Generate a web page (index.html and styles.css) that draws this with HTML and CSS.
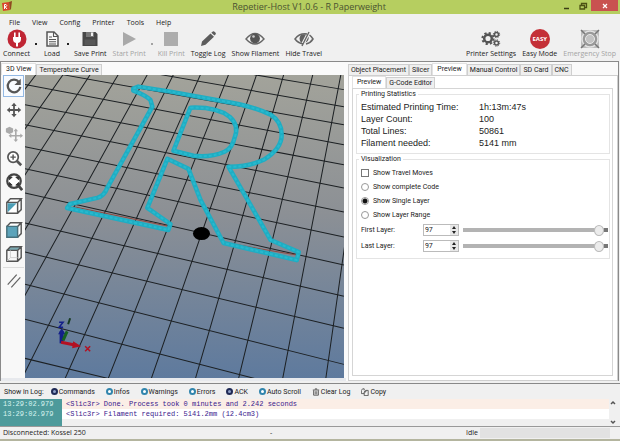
FILE: index.html
```html
<!DOCTYPE html>
<html lang="en">
<head>
<meta charset="utf-8">
<title>Repetier-Host V1.0.6 - R Paperweight</title>
<link rel="stylesheet" href="styles.css">
</head>
<body>
<header class="titlebar">
  <svg class="app-icon" viewBox="0 0 12 12"><path d="M1 3l7-1 1 8-7 1z" fill="#d8452c"/><path d="M8 2l3-1-1 8-1 1z" fill="#8f4a20"/><path d="M3.500 9V4.500h1.500q1.500 1 0 2.200H4l2 2.300" fill="none" stroke="#fff"/></svg>
  <h1>Repetier-Host V1.0.6 - R Paperweight</h1>
  <div class="window-controls">
    <button aria-label="Minimize"><svg viewBox="0 0 10 10"><path d="M2 7.500h5" stroke="#3b3d14" stroke-width="1.500"/></svg></button>
    <button aria-label="Restore"><svg viewBox="0 0 10 10"><path d="M3.500 4V2.500h5v4H7M2 4.500h4.500v3.500H2z" fill="none" stroke="#4d5214" stroke-width="1.300"/></svg></button>
    <button class="close" aria-label="Close"><svg viewBox="0 0 10 10"><path d="M3 3l4 4M7 3L3 7" stroke="#fff" stroke-width="1.200"/></svg></button>
  </div>
</header>

<nav class="menubar">
  <button>File</button><button>View</button><button>Config</button><button>Printer</button><button>Tools</button><button>Help</button>
</nav>

<div class="toolbar">
  <button class="tool"><svg viewBox="0 0 20 20"><circle cx="10" cy="10" r="9.500" fill="#c02634"/><path d="M6 8h8v2q0 3.500-3 4v3.500H9V14q-3-.5-3-4zM7 3.500h1.600V8H7zM11.400 3.500H13V8h-1.600z" fill="#fff"/></svg>Connect</button>
  <button class="caret" aria-label="Connect options"></button>
  <button class="tool"><svg viewBox="0 0 20 20"><path d="M5 3h7l4 4v10H5z" fill="#f8f8f8" stroke="#555" stroke-width="1.500"/><path d="M11.500 3v4.500H16M7 8h3M7 10.500h7M7 12.700h7M7 15h7" fill="none" stroke="#555" stroke-width="1.100"/></svg>Load</button>
  <button class="caret" aria-label="Load options"></button>
  <button class="tool"><svg viewBox="0 0 20 20"><path d="M2.500 3h13l2 2v12h-15z" fill="#474747"/><path d="M6 3h8v5H6z" fill="#777"/><path d="M11 3.500h2v3.500h-2z" fill="#f0f0f0"/><path d="M4.500 10.500h11V16h-11z" fill="#585858"/></svg>Save Print</button>
  <button class="tool disabled"><svg viewBox="0 0 20 20"><path d="M4 3l13 7-13 7z" fill="#a9a9a9"/></svg>Start Print</button>
  <button class="caret disabled" aria-label="Start options"></button>
  <button class="tool disabled"><svg viewBox="0 0 20 20"><path d="M3 3h14v14H3z" fill="#adadad"/></svg>Kill Print</button>
  <button class="tool"><svg viewBox="0 0 20 20"><path d="M3 17l1-4.500 8.500-8 3.500 3.300-8.500 8zM13.300 3.800l1.500-1.300q1-.5 2 .5l.8.800q.7.800-.1 1.600l-1 1z" fill="#5c5c5c"/></svg>Toggle Log</button>
  <button class="tool"><svg viewBox="0 0 20 20"><path d="M1 10Q10-1 19 10 10 20 1 10z" fill="#f2f2f2" stroke="#666" stroke-width="1.400"/><circle cx="10" cy="9.500" r="4.900" fill="#555"/><circle cx="8.500" cy="7.500" r="1.300" fill="#ccc"/></svg>Show Filament</button>
  <button class="tool"><svg viewBox="0 0 20 20"><path d="M9 15Q4 14 1 10q4.500-6 12-5M15.500 6q2 1.500 3.500 4-2.500 4-7 5" fill="none" stroke="#666" stroke-width="1.500"/><path d="M12 5.500q-6-1.500-6.500 4 0 3 2 4.500zM14.500 7.500q1 4-3 6.300z" fill="#606060"/><path d="M15 3L8 17" stroke="#666" stroke-width="1.400"/></svg>Hide Travel</button>
  <span class="spacer"></span>
  <button class="tool"><svg viewBox="0 0 20 20" fill="none" stroke="#555"><circle cx="7" cy="9.500" r="3.800" stroke-width="2.500"/><circle cx="7" cy="9.500" r="5.600" stroke-width="2" stroke-dasharray="2.200 2.200"/><circle cx="15.500" cy="5.500" r="2" stroke-width="1.500"/><circle cx="15.500" cy="5.500" r="3.200" stroke-dasharray="1.300 1.200"/><circle cx="15.500" cy="14" r="2" stroke-width="1.500"/><circle cx="15.500" cy="14" r="3.200" stroke-dasharray="1.300 1.200"/></svg>Printer Settings</button>
  <button class="tool"><span class="easy">EASY</span>Easy Mode</button>
  <button class="tool disabled"><svg viewBox="0 0 20 20"><path d="M1 1h18v18H1z" fill="#bcbcbc"/><circle cx="10" cy="10" r="8" fill="#999" stroke="#e2e2e2" stroke-width="1.500"/><circle cx="10" cy="10" r="4.500" fill="#c2c2c2" stroke="#e8e8e8"/><path d="M1 1l4 4M19 1l-4 4M1 19l4-4M19 19l-4-4" stroke="#777" stroke-width="1.500"/></svg>Emergency Stop</button>
</div>

<main class="workspace">
  <section class="view-pane">
    <div class="tabs" role="tablist">
      <button role="tab" class="tab active">3D View</button><button role="tab" class="tab">Temperature Curve</button>
    </div>
    <div class="view-body">
      <div class="view-tools">
        <button class="selected" aria-label="Rotate"><svg viewBox="0 0 20 20"><path d="M15.500 5.500A7 7 0 1 0 17 11" fill="none" stroke="#555" stroke-width="2.500"/><path d="M17.500 2v7h-7z" fill="#555"/></svg></button>
        <button aria-label="Move camera"><svg viewBox="0 0 20 20"><path d="M10 4v12M4 10h12" stroke="#555" stroke-width="2"/><path d="M10 2l3 3.500H7zM10 18l3-3.500H7zM2 10l3.500-3v6zM18 10l-3.500-3v6z" fill="#555"/></svg></button>
        <button aria-label="Move object"><svg viewBox="0 0 20 20"><path d="M1 4l4-2 4 2v4L5 10 1 8z" fill="#aaa"/><path d="M12 6v11M6 12h12" stroke="#aaa" stroke-width="1.800"/><path d="M12 4l2.500 3h-5zM12 19l2.500-3h-5zM4 12l3-2.500v5zM20 12l-3-2.500v5z" fill="#aaa"/></svg></button>
        <button aria-label="Zoom"><svg viewBox="0 0 20 20"><circle cx="9" cy="9" r="5.800" fill="#fff" stroke="#555" stroke-width="1.900"/><path d="M13 13l5 5" stroke="#555" stroke-width="3"/><path d="M6 9h6M9 6v6" stroke="#555" stroke-width="1.600"/></svg></button>
        <button aria-label="Fit view"><svg viewBox="0 0 20 20"><circle cx="10" cy="9" r="7.500" fill="#fff" stroke="#444" stroke-width="2.500"/><path d="M15 14l4 5" stroke="#444" stroke-width="3"/><path d="M5 7.500V4.500h3zM12 4.500h3v3zM5 10.500v3h3zM12 13.500h3v-3z" fill="#333" stroke="#333"/></svg></button>
        <button aria-label="Isometric view"><svg viewBox="0 0 20 20"><path d="M2 6h12v12H2zM2 6l4-4h12l-4 4M18 2v12l-4 4" fill="#fff" stroke="#555" stroke-width="1.600"/><path d="M3 7h10L3 17z" fill="#4b9eb6"/></svg></button>
        <button aria-label="Front view"><svg viewBox="0 0 20 20"><path d="M2 6l4-4h12l-4 4M18 2v12l-4 4" fill="#fff" stroke="#555" stroke-width="1.600"/><path d="M2 6h12v12H2z" fill="#5ca3ba" stroke="#46707c" stroke-width="1.600"/></svg></button>
        <button aria-label="Top view"><svg viewBox="0 0 20 20"><path d="M2 6l4-4h12l-4 4z" fill="#7ba9b2"/><path d="M2 6h12v12H2zM2 6l4-4h12l-4 4M18 2v12l-4 4" fill="none" stroke="#555" stroke-width="1.600"/><path d="M6 6v8h8M6 14l-4 4" fill="none" stroke="#ccc"/></svg></button>
        <button class="parallel" aria-label="Parallel projection"><svg viewBox="0 0 20 20"><path d="M3 14L13 3M7 17L17 6" stroke="#666" stroke-width="1.400"/></svg></button>
      </div>
      <svg class="scene" viewBox="25 75 318 303" preserveAspectRatio="xMidYMid slice" role="img" aria-label="Layer preview">
        <defs><linearGradient id="sky" x1="0" y1="0" x2="0" y2="1"><stop offset="0" stop-color="#a5a59b"/><stop offset=".45" stop-color="#8c9095"/><stop offset="1" stop-color="#58779f"/></linearGradient></defs>
        <path d="M0 60h370v340H0z" fill="url(#sky)"/>
        <g stroke="#1c2023" stroke-width="1" fill="none">
          <path d="M253 75L343 90M160 75L343 107M62 75L343 125M25 85L343 145M25 105L343 165M25 125L343 188M25 147L343 212M25 169L343 237M25 193L343 265M25 223L343 296M25 252L343 328M25 284L343 364M25 319L343 401M25 358L343 435"/>
          <path d="M36 75L-193 378M63 75L-150 378M90 75L-107 378M118 75L-64 378M147 75L-21 378M173 75L22 378M200 75L65 378M228 75L108 378M256 75L151 378M283 75L195 378M312 75L238 378M340 75L282 378M368 75L325 378"/>
        </g>
        <path d="M153 107L112 180M75 207L167 226M227 243L296 255" stroke="#8b4b44" stroke-width="1"/>
        <g fill="none" stroke-linejoin="round">
          <g stroke="#1fadc3" stroke-width="4.500">
            <path id="outline" d="M133 89L138 87 170 92 220 101Q252 106 270 115 281 122 281 135 281 149 263 160 248 167 228 167L247 200 270 240 298 252 296 260 223 243 200 200 188 169 167 159 147 208 170 224 168 230 67 208 70 204 97 198Q104 196 107 188L152 107 150 100Q144 95 133 91z"/>
            <path id="counter" d="M190 108Q216 107 229 117 239 126 234 138 232 148 224 152 210 158 193 156L173 151z"/>
          </g>
          <g stroke="#28b9ce" stroke-width="2" stroke-dasharray="3 2"><use href="#outline"/><use href="#counter"/></g>
        </g>
        <ellipse cx="201" cy="233.500" rx="8.500" ry="6.500"/>
        <g><path d="M61.500 343v-12" stroke="#14208a" stroke-width="4"/><path d="M58 334l3.500-6 4 6z" fill="#14208a"/><path d="M63 340l4-9" stroke="#176222" stroke-width="3"/><path d="M61 342l15 3" stroke="#b31122" stroke-width="3"/><path d="M73 341l8 5-9 2z" fill="#b31122"/><path d="M59 322h4l-4 5h4" stroke="#14208a" stroke-width="1.500" fill="none"/><path d="M70 318l-2 6" stroke="#173b22" stroke-width="2"/><path d="M85 346l5 5M90 346l-5 5" stroke="#b31122" stroke-width="1.500"/></g>
      </svg>
    </div>
  </section>

  <section class="side-pane">
    <div class="tabs" role="tablist">
      <button role="tab" class="tab">Object Placement</button><button role="tab" class="tab">Slicer</button><button role="tab" class="tab active">Preview</button><button role="tab" class="tab">Manual Control</button><button role="tab" class="tab">SD Card</button><button role="tab" class="tab">CNC</button>
    </div>
    <div class="side-body">
      <div class="tabs inner" role="tablist">
        <button role="tab" class="tab active">Preview</button><button role="tab" class="tab">G-Code Editor</button>
      </div>
      <div class="panel">
        <fieldset>
          <legend>Printing Statistics</legend>
          <dl class="stats">
            <dt>Estimated Printing Time:</dt><dd>1h:13m:47s</dd>
            <dt>Layer Count:</dt><dd>100</dd>
            <dt>Total Lines:</dt><dd>50861</dd>
            <dt>Filament needed:</dt><dd>5141 mm</dd>
          </dl>
        </fieldset>
        <fieldset>
          <legend>Visualization</legend>
          <div class="options">
            <label><input type="checkbox">Show Travel Moves</label>
            <label><input type="radio" name="layers">Show complete Code</label>
            <label><input type="radio" name="layers" checked>Show Single Layer</label>
            <label><input type="radio" name="layers">Show Layer Range</label>
          </div>
          <div class="layer-row">
            <label for="first">First Layer:</label>
            <div class="spinner"><input id="first" type="text" value="97"><span class="steps"><button aria-label="Increase first layer"></button><button class="down" aria-label="Decrease first layer"></button></span></div>
            <input type="range" min="0" max="100" value="97" aria-label="First layer">
          </div>
          <div class="layer-row">
            <label for="last">Last Layer:</label>
            <div class="spinner"><input id="last" type="text" value="97"><span class="steps"><button aria-label="Increase last layer"></button><button class="down" aria-label="Decrease last layer"></button></span></div>
            <input type="range" min="0" max="100" value="97" aria-label="Last layer">
          </div>
        </fieldset>
      </div>
    </div>
  </section>
</main>

<section class="log">
  <div class="log-bar">
    <span class="log-title">Show in Log:</span>
    <button class="toggle on" aria-pressed="true">Commands</button>
    <button class="toggle" aria-pressed="false">Infos</button>
    <button class="toggle" aria-pressed="false">Warnings</button>
    <button class="toggle" aria-pressed="false">Errors</button>
    <button class="toggle on" aria-pressed="true">ACK</button>
    <button class="toggle" aria-pressed="false">Auto Scroll</button>
    <button><svg viewBox="0 0 10 10"><path d="M1 2.500h8M4 2V1h2v1M2 3v6h6V3M4 4v4M6 4v4" fill="none" stroke="#444"/></svg>Clear Log</button>
    <button><svg viewBox="0 0 10 10"><path d="M4 3V1H2L.5 3v4H4M4 5l2-2h3v6.500H4zM6 3v2H4" fill="none" stroke="#444"/></svg>Copy</button>
  </div>
  <div class="log-body">
    <div class="log-lines">
      <div class="line tint"><time>13:29:02.979</time><span>&lt;Slic3r&gt; Done. Process took 0 minutes and 2.242 seconds</span></div>
      <div class="line"><time>13:29:02.979</time><span>&lt;Slic3r&gt; Filament required: 5141.2mm (12.4cm3)</span></div>
      <div class="line rest"><time></time><span></span></div>
    </div>
    <div class="scroll"><button aria-label="Scroll up"><svg viewBox="0 0 8 8"><path d="M2 5l2-2 2 2" fill="none" stroke="#555" stroke-width="1.500"/></svg></button><button aria-label="Scroll down"><svg viewBox="0 0 8 8"><path d="M2 3l2 2 2-2" fill="none" stroke="#555" stroke-width="1.500"/></svg></button></div>
  </div>
</section>

<footer class="status">
  <span>Disconnected: Kossel 250</span><span class="dash">-</span><span>Idle</span><div class="progress"></div>
</footer>
</body>
</html>
```
FILE: styles.css
```css
*, *::before { box-sizing: border-box; }

body {
  margin: 0;
  height: 100vh;
  display: flex;
  flex-direction: column;
  overflow: hidden;
  background: #f0f0f0;
  color: #222;
  font: 7px/10px "Open Sans", "Noto Sans", sans-serif;
  border-bottom: 2px solid #b4b59f;
}

button {
  margin: 0;
  padding: 0;
  border: 0;
  background: none;
  color: inherit;
  font: inherit;
  white-space: nowrap;
}

svg { display: block; }

/* Title bar */
.titlebar {
  display: grid;
  grid-template-columns: 1fr auto 1fr;
  height: 14px;
  padding-right: 2px;
  background: #b6ce60;
}
.app-icon { width: 12px; height: 12px; margin-left: 1px; }
.titlebar h1 { margin: 0; font-size: 9px; line-height: 13px; font-weight: 400; color: #4a5230; }
.window-controls { display: flex; justify-content: flex-end; }
.window-controls button { width: 16px; height: 11px; display: grid; place-items: center; }
.window-controls svg { width: 10px; height: 10px; }
.window-controls .close { width: 27px; background: #c95250; }

/* Menus and tools */
.menubar { display: flex; gap: 12px; height: 15px; padding: 2px 9px 0; }
.toolbar { display: flex; gap: 6px; height: 32px; padding: 0 4px 0 3px; }
.tool { display: flex; flex-direction: column; align-items: center; }
.tool svg, .easy { width: 20px; height: 20px; }
.easy {
  border-radius: 50%;
  background: #c43037;
  color: #fff;
  font-size: 6px;
  font-weight: 700;
  line-height: 20px;
  text-align: center;
}
.disabled { color: #a3a3a3; }
.caret {
  width: 2px;
  height: 2px;
  margin: 14px -1px 0;
  background: currentColor;
}
.spacer { flex: 1; }

/* Panes */
.workspace {
  flex: 1;
  min-height: 0;
  display: grid;
  grid-template-columns: minmax(0, 346fr) minmax(0, 271fr);
  gap: 2px;
  margin-right: 1px;
  border-top: 1px solid #8a8a8a;
  border-right: 1px solid #8a8a8a;
  border-left: 1px solid #8a8a8a;
  background: #fafafa;
}
.view-pane, .side-pane { display: flex; flex-direction: column; min-height: 0; }
.tabs, .side-body, .log-bar { font: 7px/10px Roboto, "Liberation Sans", sans-serif; }
.tabs { display: flex; align-items: flex-end; height: 13px; }
.tabs.inner { height: 12px; }
.tab {
  height: 11px;
  padding: 0 2px;
  border: 1px solid #cfcfcf;
  border-bottom: 0;
  background: #efefef;
}
.tab.active { height: 12px; padding: 0 4px 1px; background: #fff; border-color: #e2e2e2; }

.view-body { flex: 1; display: flex; min-height: 0; border-bottom: 3px solid #e7e9ed; }
.view-tools { width: 24px; display: flex; flex-direction: column; gap: 2px; padding-left: 2px; background: #f8f8f8; }
.view-tools button { width: 21px; height: 22px; display: grid; place-items: center; }
.view-tools svg { width: 18px; height: 18px; }
.view-tools .selected { border: 1px solid #93b9e4; background: #f8fbff; }
.view-tools .parallel { height: 26px; border-top: 1px solid #ddd; }
.scene { flex: 1; min-width: 0; height: 100%; margin-right: 2px; }

.side-body {
  flex: 1;
  display: flex;
  flex-direction: column;
  padding: 0 4px 4px 3px;
  border: 1px solid #cfcfcf;
  background: #fff;
}
.panel { flex: 1; padding: 0 2px 0 3px; border: 1px solid #d5d5d5; }
fieldset { min-width: 0; margin: 0; padding: 2px 1px 4px 2px; border: 1px solid #e4e4e4; }
legend { margin: 0; padding: 0 2px; }
.stats {
  display: grid;
  grid-template-columns: 119fr 130fr;
  margin: 0;
  padding-left: 2px;
  font: 9px/12px "Liberation Sans", Arial, sans-serif;
}
.stats dd { margin: 0; }
.options { display: flex; flex-direction: column; align-items: flex-start; padding: 0 2px; }
.options label { display: flex; align-items: center; gap: 4px; height: 14px; }
.options input {
  appearance: none;
  width: 8px;
  height: 8px;
  margin: 0;
  border: 1px solid #777;
  background: #fff;
}
.options input[type="radio"] { border-color: #999; border-radius: 50%; }
.options input:checked { background: radial-gradient(#111 0 2px, #fff 3px); }

.layer-row {
  display: grid;
  grid-template-columns: 62px 36px 1fr;
  align-items: center;
  height: 16px;
  padding-left: 2px;
}
.spinner { display: flex; height: 12px; border: 1px solid #bbb; background: #fff; }
.spinner input { flex: 1; min-width: 0; padding: 0 1px; border: 0; font: inherit; color: inherit; background: none; }
.steps { display: flex; flex-direction: column; width: 8px; background: #e8e8e8; }
.steps button { flex: 1; display: grid; place-items: center; }
.steps button::before { content: ""; border: 2px solid transparent; border-top: 0; border-bottom: 3px solid #222; }
.steps .down::before { border-top: 3px solid #222; border-bottom: 0; }
input[type="range"] {
  appearance: none;
  min-width: 0;
  height: 11px;
  margin: 0 0 0 4px;
  background: linear-gradient(90deg, #b3b3b3 calc(100% - 4px), #777 0) center / 100% 4px no-repeat;
}
input[type="range"]::-webkit-slider-thumb {
  appearance: none;
  width: 10px;
  height: 11px;
  border: 1px solid #bbb;
  border-radius: 50%;
  background: #ececec;
}

/* Log */
.log { border-top: 1px solid #888; border-bottom: 1px solid #999; margin-top: 2px; }
.log-bar { display: flex; align-items: center; gap: 11px; height: 15px; padding-left: 4px; }
.log-title { margin-right: -4px; }
.log-bar button { display: flex; align-items: center; gap: 1px; }
.log-bar svg { width: 8px; height: 8px; }
.toggle::before {
  content: "";
  width: 7px;
  height: 7px;
  border: 2px solid #3185ad;
  border-radius: 50%;
  background: #fff;
}
.toggle.on::before { border-color: #1f2a56; background: #8ea0c8; }
.log-body { display: flex; height: 27px; }
.log-lines { flex: 1; min-width: 0; font: 7px/10px "Liberation Mono", "Courier New", monospace; color: #38188c; }
.line { display: flex; height: 10px; background: #fff; }
.line.tint { background: #fbeee6; }
.line.rest { height: 7px; background: #f0f0f0; }
.line time { width: 62px; margin-right: 4px; padding-left: 3px; background: #4d9a9b; color: #d8f4f0; }
.scroll { width: 11px; display: flex; flex-direction: column; justify-content: space-between; }
.scroll svg { width: 8px; height: 8px; }

/* Status */
.status {
  display: grid;
  grid-template-columns: 267fr 196fr 14px 130fr 10px;
  height: 12px;
  padding-left: 3px;
  line-height: 11px;
}
.progress { height: 10px; margin-top: 1px; background: #e2e2e2; }
```
